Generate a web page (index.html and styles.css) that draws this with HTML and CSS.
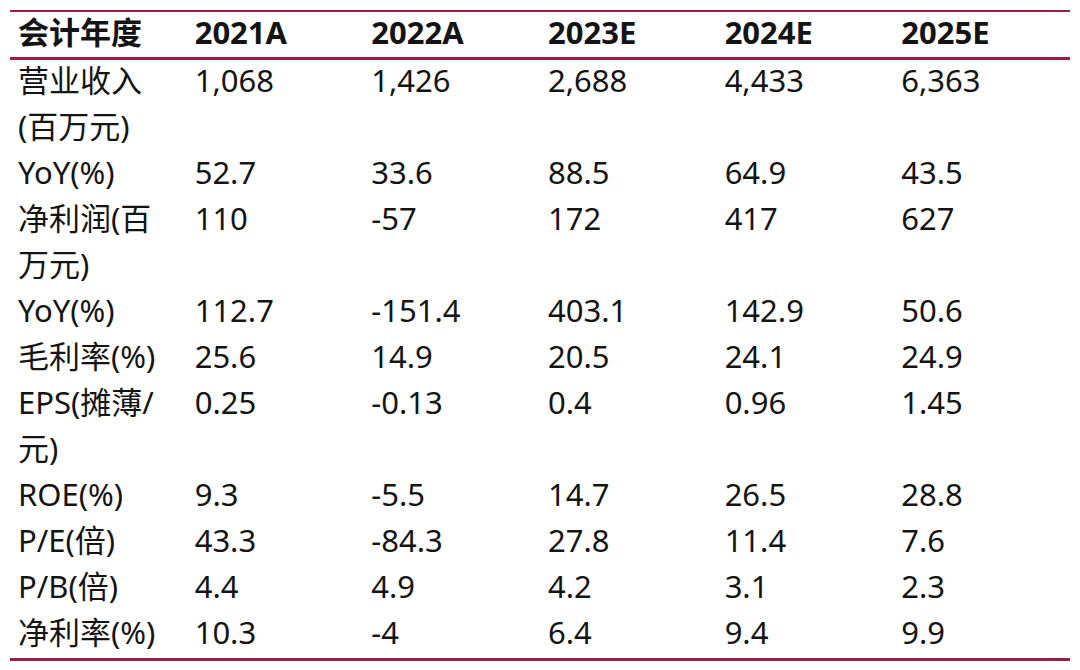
FILE: index.html
```html
<!DOCTYPE html>
<html lang="zh-CN">
<head>
<meta charset="utf-8">
<title>盈利预测</title>
<link rel="stylesheet" href="styles.css">
</head>
<body>
<table class="fin">
  <colgroup>
    <col class="c"><col class="c"><col class="c"><col class="c"><col class="c"><col class="c">
  </colgroup>
  <thead>
    <tr><th><span class="hv">会计年度</span></th><th><span class="hv">2021A</span></th><th><span class="hv">2022A</span></th><th><span class="hv">2023E</span></th><th><span class="hv">2024E</span></th><th><span class="hv">2025E</span></th></tr>
  </thead>
  <tbody>
    <tr><td><span class="v">营业收入(百万元)</span></td><td><span class="v">1,068</span></td><td><span class="v">1,426</span></td><td><span class="v">2,688</span></td><td><span class="v">4,433</span></td><td><span class="v">6,363</span></td></tr>
    <tr><td><span class="v">YoY(%)</span></td><td><span class="v">52.7</span></td><td><span class="v">33.6</span></td><td><span class="v">88.5</span></td><td><span class="v">64.9</span></td><td><span class="v">43.5</span></td></tr>
    <tr><td><span class="v">净利润(百万元)</span></td><td><span class="v">110</span></td><td><span class="v">-57</span></td><td><span class="v">172</span></td><td><span class="v">417</span></td><td><span class="v">627</span></td></tr>
    <tr><td><span class="v">YoY(%)</span></td><td><span class="v">112.7</span></td><td><span class="v">-151.4</span></td><td><span class="v">403.1</span></td><td><span class="v">142.9</span></td><td><span class="v">50.6</span></td></tr>
    <tr><td><span class="v">毛利率(%)</span></td><td><span class="v">25.6</span></td><td><span class="v">14.9</span></td><td><span class="v">20.5</span></td><td><span class="v">24.1</span></td><td><span class="v">24.9</span></td></tr>
    <tr><td><span class="v">EPS(摊薄/元)</span></td><td><span class="v">0.25</span></td><td><span class="v">-0.13</span></td><td><span class="v">0.4</span></td><td><span class="v">0.96</span></td><td><span class="v">1.45</span></td></tr>
    <tr><td><span class="v">ROE(%)</span></td><td><span class="v">9.3</span></td><td><span class="v">-5.5</span></td><td><span class="v">14.7</span></td><td><span class="v">26.5</span></td><td><span class="v">28.8</span></td></tr>
    <tr><td><span class="v">P/E(倍)</span></td><td><span class="v">43.3</span></td><td><span class="v">-84.3</span></td><td><span class="v">27.8</span></td><td><span class="v">11.4</span></td><td><span class="v">7.6</span></td></tr>
    <tr><td><span class="v">P/B(倍)</span></td><td><span class="v">4.4</span></td><td><span class="v">4.9</span></td><td><span class="v">4.2</span></td><td><span class="v">3.1</span></td><td><span class="v">2.3</span></td></tr>
    <tr><td><span class="v">净利率(%)</span></td><td><span class="v">10.3</span></td><td><span class="v">-4</span></td><td><span class="v">6.4</span></td><td><span class="v">9.4</span></td><td><span class="v">9.9</span></td></tr>
  </tbody>
</table>
</body>
</html>
```
FILE: styles.css
```css
html, body {
  margin: 0;
  padding: 0;
  background: #ffffff;
}

body {
  padding: 10px 10px 0 10px;
}

.fin {
  width: 1060px;
  table-layout: fixed;
  border-collapse: collapse;
  font-family: "Noto Sans", "Noto Sans CJK SC", sans-serif;
  font-size: 31px;
  color: #141414;
}

.fin .c {
  width: 176.66px;
}

.fin th,
.fin td {
  text-align: left;
  vertical-align: top;
  padding: 0 20px 0 8px;
  line-height: 46px;
}

.fin th {
  font-weight: 700;
  height: 45px;
  border-top: 2px solid #9a1d44;
  border-bottom: 3px solid #9a1d44;
  line-height: 44px;
}

.fin tbody tr:last-child td {
  border-bottom: 3px solid #9a1d44;
}

.fin .v {
  line-height: 40px;
  vertical-align: 3px;
}

.fin .hv {
  line-height: 40px;
  vertical-align: 2px;
}
```
